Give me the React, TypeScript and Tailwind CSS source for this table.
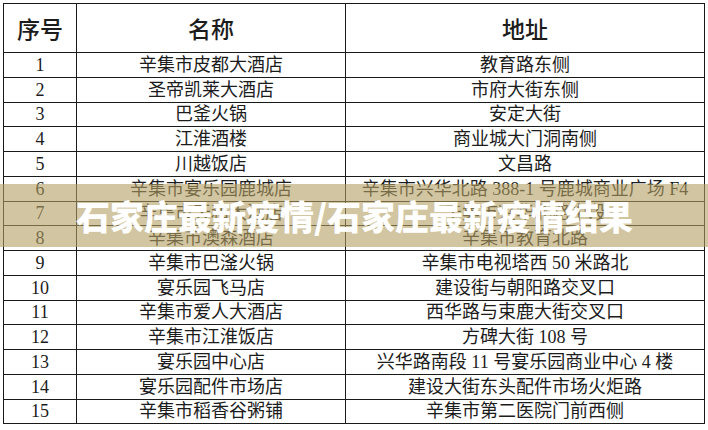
import React from 'react';

const rows: [string, string, string][] = [
  ['1', '辛集市皮都大酒店', '教育路东侧'],
  ['2', '圣帝凯莱大酒店', '市府大街东侧'],
  ['3', '巴釜火锅', '安定大街'],
  ['4', '江淮酒楼', '商业城大门洞南侧'],
  ['5', '川越饭店', '文昌路'],
  ['6', '辛集市宴乐园鹿城店', '辛集市兴华北路 388-1 号鹿城商业广场 F4'],
  ['7', '辛集市天和大酒店', '辛集市兴华北路中段'],
  ['8', '辛集市澳森酒店', '辛集市教育北路'],
  ['9', '辛集市巴滏火锅', '辛集市电视塔西 50 米路北'],
  ['10', '宴乐园飞马店', '建设街与朝阳路交叉口'],
  ['11', '辛集市爱人大酒店', '西华路与束鹿大街交叉口'],
  ['12', '辛集市江淮饭店', '方碑大街 108 号'],
  ['13', '宴乐园中心店', '兴华路南段 11 号宴乐园商业中心 4 楼'],
  ['14', '宴乐园配件市场店', '建设大街东头配件市场火炬路'],
  ['15', '辛集市稻香谷粥铺', '辛集市第二医院门前西侧'],
];

const bodyFont = { fontFamily: '"Liberation Serif", "Noto Sans CJK SC", serif' };

export default function App() {
  return (
    <div className="relative w-[708px] h-[430px] overflow-hidden bg-white">
      <div className="pt-[3px] pl-[3px]">
        <table className="w-[701px] border-collapse table-fixed text-[#1c1c1c]">
          <colgroup>
            <col className="w-[73px]" />
            <col className="w-[269px]" />
            <col className="w-[359px]" />
          </colgroup>
          <thead>
            <tr
              className="h-[49px] text-[23px]"
              style={{ fontFamily: '"Noto Sans CJK SC", sans-serif' }}
            >
              <th className="border-[1.5px] border-[#1a1a1a] font-medium">序号</th>
              <th className="border-[1.5px] border-[#1a1a1a] font-medium">名称</th>
              <th className="border-[1.5px] border-[#1a1a1a] font-medium">地址</th>
            </tr>
          </thead>
          <tbody className="text-[18px] leading-none" style={bodyFont}>
            {rows.map(([no, name, addr]) => (
              <tr key={no} className="h-[24.75px]">
                <td className="border-[1.5px] border-[#1a1a1a] text-center">{no}</td>
                <td className="border-[1.5px] border-[#1a1a1a] text-center whitespace-nowrap">{name}</td>
                <td className="border-[1.5px] border-[#1a1a1a] text-center whitespace-nowrap overflow-hidden">
                  {addr}
                </td>
              </tr>
            ))}
          </tbody>
        </table>
      </div>

      {/* 标题横幅 */}
      <div className="absolute left-0 right-0 top-[184px] h-[63px] bg-[rgba(180,160,100,0.6)] flex items-center pl-[76px]">
        <span
          className="text-white text-[34px] font-black leading-none whitespace-nowrap"
          style={{ fontFamily: '"Noto Sans CJK SC", sans-serif' }}
        >
          石家庄最新疫情/石家庄最新疫情结果
        </span>
      </div>
    </div>
  );
}
